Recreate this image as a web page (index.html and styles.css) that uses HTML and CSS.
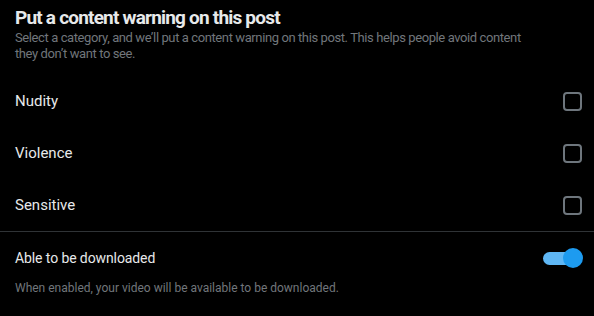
FILE: index.html
```html
<!DOCTYPE html>
<html lang="en">
<head>
    <meta charset="UTF-8">
    <meta name="viewport" content="width=device-width, initial-scale=1.0">
    <title>Content warning</title>
    <link rel="stylesheet" href="styles.css">
</head>
<body>
    <div class="header">
        <h1 class="title">Put a content warning on this post</h1>
        <p class="desc">Select a category, and we’ll put a content warning on this post. This helps people avoid content they don’t want to see.</p>
    </div>
    <div class="options">
        <label class="option">
            <span>Nudity</span>
            <span class="check"></span>
        </label>
        <label class="option">
            <span>Violence</span>
            <span class="check"></span>
        </label>
        <label class="option">
            <span>Sensitive</span>
            <span class="check"></span>
        </label>
    </div>
    <div class="download">
        <div class="download-row">
            <span>Able to be downloaded</span>
            <span class="toggle"><span class="knob"></span></span>
        </div>
        <p class="download-desc">When enabled, your video will be available to be downloaded.</p>
    </div>
</body>
</html>
```

FILE: styles.css
```css
* {
    margin: 0;
    padding: 0;
    box-sizing: border-box;
}
body {
    background: #000;
    color: #e7e9ea;
    font-family: Roboto, "Liberation Sans", sans-serif;
    width: 594px;
    height: 316px;
    overflow: hidden;
}
.header {
    padding: 6px 15px 0 15px;
}
.title {
    font-family: Roboto, sans-serif;
    font-size: 19px;
    font-weight: 700;
    line-height: 24px;
    color: #e7e9ea;
    letter-spacing: -0.8px;
}
.desc {
    max-width: 530px;
    font-size: 13px;
    line-height: 16px;
    letter-spacing: -0.4px;
    color: #71767b;
}
.options {
    margin-top: 13px;
    border-bottom: 1px solid #2f3336;
}
.option {
    height: 52px;
    padding: 0 12px 0 15px;
    display: flex;
    align-items: center;
    justify-content: space-between;
    font-size: 15px;
}
.check {
    width: 19px;
    height: 19px;
    border: 2px solid #6e767d;
    border-radius: 4px;
}
.download {
    padding: 16px 11px 0 15px;
}
.download-row {
    display: flex;
    align-items: center;
    justify-content: space-between;
    font-size: 14px;
    line-height: 20px;
    letter-spacing: -0.1px;
}
.toggle {
    position: relative;
    width: 40px;
    height: 20px;
}
.toggle::before {
    content: "";
    position: absolute;
    left: 0;
    top: 4px;
    width: 32px;
    height: 13px;
    border-radius: 7px;
    background: #5fb7f5;
}
.knob {
    position: absolute;
    right: 0;
    top: 0;
    width: 20px;
    height: 20px;
    border-radius: 50%;
    background: #1d9bf0;
}
.download-desc {
    margin-top: 12px;
    font-size: 12px;
    line-height: 16px;
    color: #71767b;
}
```
